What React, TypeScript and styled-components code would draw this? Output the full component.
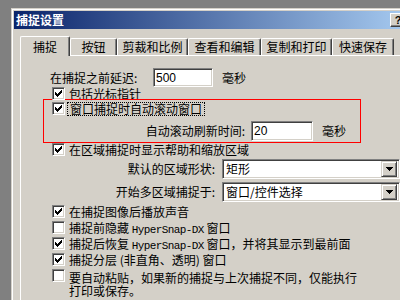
import React from 'react'
import styled, { createGlobalStyle } from 'styled-components'

const face = '#d4d0c8'
const cjk = `"Noto Sans CJK SC", "Liberation Sans", sans-serif`

const GlobalStyle = createGlobalStyle`
  html, body {
    margin: 0;
    padding: 0;
    background: #808080;
    overflow: hidden;
  }
  body {
    width: 400px;
    height: 300px;
    font-family: ${cjk};
    font-size: 12px;
    color: #000;
  }
`

const Desktop = styled.div`
  width: 400px;
  height: 300px;
  padding: 8px 0 0 11px;
  box-sizing: border-box;
  overflow: hidden;
`

const Window = styled.div`
  width: 400px;
  height: 320px;
  box-sizing: border-box;
  background: ${face};
  border: 1px solid;
  border-color: ${face} #404040 #404040 ${face};
  box-shadow: inset 1px 1px #fff, inset -1px -1px #808080;
  padding: 2px;
`

const TitleBar = styled.div`
  height: 18px;
  display: flex;
  align-items: center;
  justify-content: space-between;
  padding: 0 2px;
  background: linear-gradient(to right, #0a246a, #a6caf0);
`

const Title = styled.span`
  color: #fff;
  font-weight: 700;
  font-size: 12px;
  line-height: 12px;
`

const HelpButton = styled.span`
  width: 16px;
  height: 14px;
  box-sizing: border-box;
  background: ${face};
  border: 1px solid;
  border-color: #fff #404040 #404040 #fff;
  box-shadow: inset -1px -1px #808080;
  display: flex;
  align-items: center;
  justify-content: center;
  font-family: "Liberation Sans", sans-serif;
  font-weight: 700;
  font-size: 11px;
  line-height: 11px;
`

const Body = styled.div`
  padding: 7px 0 0 6px;
`

const TabStrip = styled.div`
  display: flex;
  align-items: flex-end;
  height: 19px;
  position: relative;
  z-index: 1;
`

const Tab = styled.div<{ $w: number; $active?: boolean }>`
  width: ${({ $w }) => $w}px;
  height: ${({ $active }) => ($active ? 20 : 17)}px;
  margin-bottom: ${({ $active }) => ($active ? -1 : 0)}px;
  padding-top: ${({ $active }) => ($active ? 4 : 2)}px;
  box-sizing: border-box;
  background: ${face};
  border-top: 1px solid #fff;
  border-left: 1px solid #fff;
  border-right: 1px solid #404040;
  border-radius: 2px 2px 0 0;
  box-shadow: inset -1px 0 #808080;
  text-align: center;
  line-height: 12px;
  white-space: nowrap;
`

const Panel = styled.div`
  border-top: 1px solid #fff;
  border-left: 1px solid #fff;
  background: ${face};
  padding: 12px 0 0 22px;
  height: 260px;
  display: flex;
  flex-direction: column;
`

const FieldRow = styled.div<{ $indent?: number; $top?: number; $h: number }>`
  display: flex;
  align-items: center;
  height: ${({ $h }) => $h}px;
  flex: none;
  margin-left: ${({ $indent }) => $indent ?? 9}px;
  margin-top: ${({ $top }) => $top ?? 0}px;
  line-height: 12px;
`

const FieldLabel = styled.span<{ $w: number; $right?: boolean }>`
  width: ${({ $w }) => $w}px;
  text-align: ${({ $right }) => ($right ? 'right' : 'left')};
  white-space: nowrap;
`

const Sunken = styled.div`
  box-sizing: border-box;
  background: #fff;
  border: 1px solid;
  border-color: #808080 #fff #fff #808080;
  box-shadow: inset 1px 1px #404040, inset -1px -1px ${face};
`

const TextInput = styled(Sunken)<{ $w: number; $h: number; $gap?: number }>`
  width: ${({ $w }) => $w}px;
  height: ${({ $h }) => $h}px;
  margin-left: ${({ $gap }) => $gap ?? 0}px;
  padding: 0 0 0 2px;
  display: flex;
  align-items: center;
  font-family: "Liberation Sans", sans-serif;
  font-size: 12px;
`

const Unit = styled.span`
  margin-left: 9px;
`

const Select = styled(Sunken)`
  width: 178px;
  height: 20px;
  margin-left: 7px;
  display: flex;
  align-items: center;
  padding: 2px;
`

const SelectValue = styled.span`
  flex: 1;
  padding-left: 1px;
  line-height: 12px;
`

const ArrowButton = styled.span`
  width: 16px;
  height: 16px;
  box-sizing: border-box;
  background: ${face};
  border: 1px solid;
  border-color: ${face} #404040 #404040 ${face};
  box-shadow: inset 1px 1px #fff, inset -1px -1px #808080;
  display: flex;
  align-items: center;
  justify-content: center;
`

const Highlight = styled.div`
  width: 318px;
  flex: none;
  box-sizing: border-box;
  border: 1px solid #ff0000;
  padding: 2px 0 1px 8px;
  margin-top: -1px;
  display: flex;
  flex-direction: column;
`

const CheckRow = styled.div<{ $top?: number; $indent?: number; $wrap?: boolean }>`
  display: flex;
  flex: none;
  height: ${({ $wrap }) => ($wrap ? 'auto' : '13px')};
  align-items: ${({ $wrap }) => ($wrap ? 'flex-start' : 'center')};
  margin-left: ${({ $indent }) => $indent ?? 9}px;
  margin-top: ${({ $top }) => $top ?? 0}px;
  line-height: ${({ $wrap }) => ($wrap ? 13 : 12)}px;
`

const Box = styled(Sunken)`
  width: 13px;
  height: 13px;
  flex: none;
  position: relative;
`

const CheckText = styled.span<{ $focus?: boolean; $wrap?: boolean }>`
  margin-left: ${({ $focus }) => ($focus ? 2 : 4)}px;
  margin-top: ${({ $wrap }) => ($wrap ? 2 : 0)}px;
  padding: ${({ $focus }) => ($focus ? '0 2px' : '0')};
  border: ${({ $focus }) => ($focus ? '1px dotted #000' : 'none')};
  white-space: nowrap;
`

const Mono = styled.span`
  font-family: "Liberation Mono", monospace;
  font-size: 11px;
  letter-spacing: -0.6px;
  line-height: 0;
`

const CheckMark = () => (
  <svg width="7" height="7" viewBox="0 0 7 7" shapeRendering="crispEdges" style={{ position: 'absolute', left: 2, top: 2 }}>
    {[2, 3, 4, 3, 2, 1, 0].map((y, x) => (
      <rect key={x} x={x} y={y} width="1" height="3" fill="#000" />
    ))}
  </svg>
)

function Check({ checked, children, focus, wrap, top, indent }: { checked?: boolean; children: React.ReactNode; focus?: boolean; wrap?: boolean; top?: number; indent?: number }) {
  return (
    <CheckRow $top={top} $wrap={wrap} $indent={indent}>
      <Box>{checked && <CheckMark />}</Box>
      <CheckText $focus={focus} $wrap={wrap}>{children}</CheckText>
    </CheckRow>
  )
}

function Dropdown({ label, value, top }: { label: string; value: string; top: number }) {
  return (
    <FieldRow $top={top} $h={20}>
      <FieldLabel $w={163} $right>{label}</FieldLabel>
      <Select>
        <SelectValue>{value}</SelectValue>
        <ArrowButton>
          <svg width="7" height="4" viewBox="0 0 7 4" shapeRendering="crispEdges">
            <path d="M0 0h7v1h-1v1h-1v1h-1v1h-1v-1h-1v-1h-1v-1h-1z" fill="#000" />
          </svg>
        </ArrowButton>
      </Select>
    </FieldRow>
  )
}

const tabs = [
  { label: '捕捉', w: 50 },
  { label: '按钮', w: 47 },
  { label: '剪裁和比例', w: 71 },
  { label: '查看和编辑', w: 73 },
  { label: '复制和打印', w: 71 },
  { label: '快速保存', w: 62 },
]

export default function App() {
  return (
    <Desktop>
      <GlobalStyle />
      <Window>
        <TitleBar>
          <Title>捕捉设置</Title>
          <HelpButton>?</HelpButton>
        </TitleBar>
        <Body>
          <TabStrip>
            {tabs.map((t, i) => (
              <Tab key={t.label} $w={t.w} $active={i === 0}>
                {t.label}
              </Tab>
            ))}
          </TabStrip>
          <Panel>
            <FieldRow $indent={7} $h={19}>
              <FieldLabel $w={103}>在捕捉之前延迟:</FieldLabel>
              <TextInput $w={60} $h={19}>500</TextInput>
              <Unit>毫秒</Unit>
            </FieldRow>
            <Check checked>包括光标指针</Check>
            <Highlight>
              <Check checked focus indent={0}>窗口捕捉时自动滚动窗口</Check>
              <FieldRow $indent={0} $top={6} $h={20}>
                <FieldLabel $w={193} $right>自动滚动刷新时间:</FieldLabel>
                <TextInput $w={62} $h={20} $gap={6}>20</TextInput>
                <Unit>毫秒</Unit>
              </FieldRow>
            </Highlight>
            <Check checked>在区域捕捉时显示帮助和缩放区域</Check>
            <Dropdown label="默认的区域形状:" value="矩形" top={3} />
            <Dropdown label="开始多区域捕捉于:" value="窗口/控件选择" top={3} />
            <Check checked top={3}>在捕捉图像后播放声音</Check>
            <Check top={3}>
              捕捉前隐藏 <Mono>HyperSnap-DX</Mono> 窗口
            </Check>
            <Check checked top={3}>
              捕捉后恢复 <Mono>HyperSnap-DX</Mono> 窗口，并将其显示到最前面
            </Check>
            <Check checked top={3}>捕捉分层 (非直角、透明) 窗口</Check>
            <Check wrap top={3}>
              要自动粘贴，如果新的捕捉与上次捕捉不同，仅能执行
              <br />
              打印或保存。
            </Check>
          </Panel>
        </Body>
      </Window>
    </Desktop>
  )
}
